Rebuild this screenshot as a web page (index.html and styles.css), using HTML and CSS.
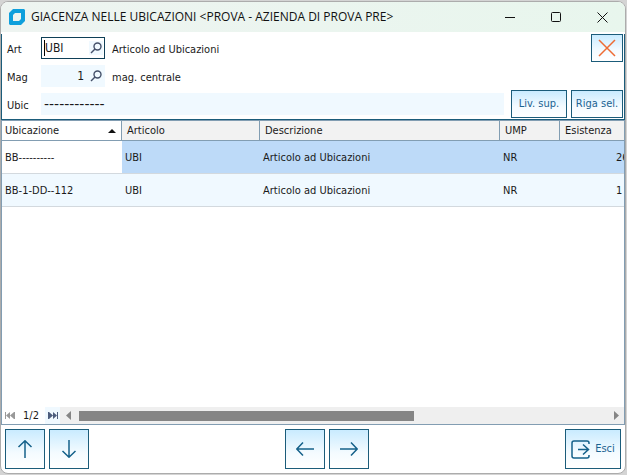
FILE: index.html
```html
<!DOCTYPE html>
<html lang="it">
<head>
    <meta charset="utf-8">
    <title>GIACENZA NELLE UBICAZIONI</title>
    <link rel="stylesheet" href="styles.css">
</head>
<body>
<div class="window">
    <div class="titlebar">
        <svg class="logo" width="16" height="16" viewBox="0 0 16 16"><path fill="#0f9fdc" fill-rule="evenodd" d="M4 0H15L16 1V12L12 16H1L0 15V4ZM6 4L4 6V12H10L12 10V4Z"/></svg>
        <span class="title">GIACENZA NELLE UBICAZIONI &lt;PROVA - AZIENDA DI PROVA PRE&gt;</span>
        <button class="winbtn" aria-label="Riduci"><svg width="11" height="11" viewBox="0 0 11 11"><path d="M0 5.5H10"/></svg></button>
        <button class="winbtn" aria-label="Ingrandisci"><svg width="11" height="11" viewBox="0 0 11 11"><rect x=".5" y=".5" width="9" height="9" rx="1"/></svg></button>
        <button class="winbtn" aria-label="Chiudi"><svg width="11" height="11" viewBox="0 0 11 11"><path d="M.5 .5L10.500 10.500M10.500 .5L.5 10.500"/></svg></button>
    </div>

    <div class="filters">
        <div class="line">
            <label for="art">Art</label>
            <div class="field active">
                <span class="caret"></span>
                <input id="art" type="text" value="UBI">
                <button class="lookup" aria-label="Cerca articolo"><svg width="12" height="12" viewBox="0 0 12 12"><circle cx="7.500" cy="4.500" r="3.500"/><path d="M5 7L1 11"/></svg></button>
            </div>
            <span class="note">Articolo ad Ubicazioni</span>
            <button class="btn cancel" aria-label="Annulla"><svg width="18" height="18" viewBox="0 0 18 18"><path d="M1 1L17 17M17 1L1 17"/></svg></button>
        </div>
        <div class="line">
            <label for="mag">Mag</label>
            <div class="field">
                <input id="mag" class="num" type="text" value="1">
                <button class="lookup" aria-label="Cerca magazzino"><svg width="12" height="12" viewBox="0 0 12 12"><circle cx="7.500" cy="4.500" r="3.500"/><path d="M5 7L1 11"/></svg></button>
            </div>
            <span class="note">mag. centrale</span>
        </div>
        <div class="line">
            <label for="ubic">Ubic</label>
            <div class="field wide">
                <input id="ubic" type="text" value="------------">
            </div>
            <button class="btn level">Liv. sup.</button>
            <button class="btn pick">Riga sel.</button>
        </div>
    </div>

    <div class="grid">
        <div class="rows">
            <table>
                <colgroup><col class="c-ubi"><col class="c-art"><col class="c-des"><col class="c-ump"><col class="c-esi"></colgroup>
                <thead>
                <tr>
                    <th class="sorted"><div class="sort">Ubicazione<svg width="8" height="4" viewBox="0 0 8 4"><path d="M4 0L8 4H0Z"/></svg></div></th>
                    <th>Articolo</th>
                    <th>Descrizione</th>
                    <th>UMP</th>
                    <th>Esistenza</th>
                </tr>
                </thead>
                <tbody>
                <tr class="selected">
                    <td class="current">BB----------</td>
                    <td>UBI</td>
                    <td>Articolo ad Ubicazioni</td>
                    <td>NR</td>
                    <td class="qty">26</td>
                </tr>
                <tr class="alt">
                    <td>BB-1-DD--112</td>
                    <td>UBI</td>
                    <td>Articolo ad Ubicazioni</td>
                    <td>NR</td>
                    <td class="qty">1</td>
                </tr>
                </tbody>
            </table>
        </div>
        <div class="navbar">
            <button class="nav first" aria-label="Prima riga"><svg width="10" height="7" viewBox="0 0 10 7"><path d="M0 0H1V7H0ZM5 0V7L1 3.500ZM9 0V7L5 3.500ZM9 0H10V7H9Z"/></svg></button>
            <span class="pos">1/2</span>
            <button class="nav last" aria-label="Ultima riga"><svg width="10" height="7" viewBox="0 0 10 7"><path d="M0 0H1V7H0ZM1 0V7L5 3.500ZM5 0V7L9 3.500ZM9 0H10V7H9Z"/></svg></button>
            <div class="scroll">
                <svg width="5" height="9" viewBox="0 0 5 9"><path d="M5 0V9L0 4.500Z"/></svg>
                <div class="track"><div class="thumb"></div></div>
                <svg width="5" height="9" viewBox="0 0 5 9"><path d="M0 0V9L5 4.500Z"/></svg>
            </div>
        </div>
    </div>

    <div class="footer">
        <div class="group">
            <button class="btn arrow" aria-label="Su"><svg width="18" height="18" viewBox="0 0 18 18"><path d="M9 18V1M2.500 7L9 .8L15.500 7"/></svg></button>
            <button class="btn arrow" aria-label="Giù"><svg width="18" height="18" viewBox="0 0 18 18"><path d="M9 0V17M2.500 11L9 17.200L15.500 11"/></svg></button>
        </div>
        <div class="group">
            <button class="btn arrow" aria-label="Sinistra"><svg width="18" height="18" viewBox="0 0 18 18"><path d="M18 9H1M7 2.500L.8 9L7 15.500"/></svg></button>
            <button class="btn arrow" aria-label="Destra"><svg width="18" height="18" viewBox="0 0 18 18"><path d="M0 9H17M11 2.500L17.200 9L11 15.500"/></svg></button>
        </div>
        <button class="btn exit"><svg width="19" height="19" viewBox="0 0 19 19"><path d="M18 4V3Q18 1 16 1H3Q1 1 1 3V16Q1 18 3 18H16Q18 18 18 16V15M7 9.500H17.500M12 4.500L17.500 9.500L12 14.500"/></svg>Esci</button>
    </div>
</div>
</body>
</html>
```
FILE: styles.css
```css
* { box-sizing: border-box; }
body { margin: 0; padding: 1px 1px 1px 0; background: #d4d4d4; font: 11px/14px "DejaVu Sans Condensed", "DejaVu Sans", sans-serif; color: #1a1a1a; }
button, input { font: inherit; color: inherit; margin: 0; padding: 0; border: 0; background: none; border-radius: 0; }
svg { display: block; flex: none; fill: none; }

.window { display: flex; flex-direction: column; height: calc(100vh - 2px); background: #fff; border: 1px solid #acacac; border-radius: 8px; overflow: hidden; }

/* title bar */
.titlebar { display: flex; align-items: center; height: 30px; padding-left: 8px; background: linear-gradient(90deg, #eef4f1, #e8f6ed); }
.title { flex: 1; margin-left: 6px; font: 12px/16px "Open Sans", "Noto Sans", sans-serif; white-space: nowrap; color: #111; }
.winbtn { display: flex; align-items: center; justify-content: center; width: 46px; height: 30px; stroke: #111; }

/* filters */
.filters { margin-top: 2px; padding: 0 1px 1px 5px; border: 1px solid #1b5c7a; border-top: 0; }
.line { display: flex; align-items: center; height: 28px; }
.line label { width: 34px; padding-top: 3px; }
.field { display: flex; align-items: center; width: 64px; height: 22px; padding: 0 2px 0 3px; background: #f0f9ff; font-size: 12px; }
.field.active { background: #fff; border: 1px solid #0f3f57; padding: 0 1px 0 2px; }
.field.wide { flex: 1; margin-right: 7px; font: 14px/18px "DejaVu Sans", sans-serif; }
.field input { flex: 1; min-width: 0; height: 18px; outline: 0; }
.field .num { text-align: right; padding-right: 5px; }
.caret { width: 1px; height: 16px; background: #000; }
.lookup { width: 14px; padding: 1px; background: #f0f9ff; stroke: #44506a; stroke-width: 1.4; }
.note { flex: 1; padding: 3px 0 0 7px; }

.btn { display: flex; align-items: center; justify-content: center; height: 28px; border: 1px solid #1b5c7a; background: linear-gradient(#c9ebff, #f4fbff 60%, #fff); color: #1b6291; white-space: nowrap; }
.btn svg { stroke: #14618a; stroke-width: 1.5; }
.cancel { width: 32px; }
.cancel svg { stroke: #ee6b33; }
.level { width: 56px; margin-right: 4px; }
.pick { width: 52px; }

/* data grid */
.grid { display: flex; flex-direction: column; flex: 1; min-height: 0; border: 1px solid #829db2; }
.rows { flex: 1; overflow: hidden; }
table { width: 720px; table-layout: fixed; border-collapse: separate; border-spacing: 0; }
.c-ubi { width: 120px; }
.c-art { width: 138px; }
.c-des { width: 240px; }
.c-ump { width: 60px; }
th { height: 20px; padding: 0 5px; text-align: left; font-weight: normal; background: #f2f2f2; border-right: 1px solid #829db2; border-bottom: 1px solid #829db2; }
th.sorted { padding-left: 3px; background: #fff; }
.sort { display: flex; align-items: center; justify-content: space-between; }
.sort path { fill: #111; }
td { height: 33px; padding: 1px 3px 0; border-bottom: 1px solid #d3d9de; white-space: nowrap; }
.selected td { background: #bddaf8; }
.selected .current { background: #fff; }
.alt td { background: #f0f9ff; }
td.qty { padding-left: 56px; }

.navbar { display: flex; height: 17px; }
.nav { display: flex; align-items: center; justify-content: center; width: 15px; fill: #4d5d7d; }
.nav svg { fill: inherit; }
.nav.first { fill: #999; }
.nav.last { background: #f0f9ff; }
.pos { width: 28px; text-align: center; line-height: 18px; }
.scroll { display: flex; flex: 1; align-items: center; padding: 0 5px 0 6px; background: #efefef; }
.scroll path { fill: #858585; }
.track { flex: 1; margin: 0 3px 0 8px; }
.thumb { width: 63%; height: 10px; background: #858585; }

/* footer */
.footer { display: flex; justify-content: space-between; height: 48px; padding: 4px; }
.group { display: flex; gap: 4px; }
.arrow { width: 40px; height: 40px; }
.exit { width: 56px; height: 40px; gap: 5px; }
```
